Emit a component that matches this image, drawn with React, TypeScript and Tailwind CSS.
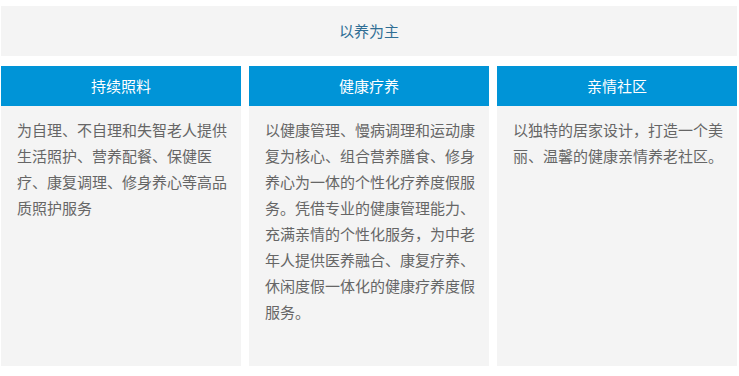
import React from "react";

const columns = [
  {
    title: "持续照料",
    text: "为自理、不自理和失智老人提供生活照护、营养配餐、保健医疗、康复调理、修身养心等高品质照护服务",
  },
  {
    title: "健康疗养",
    text: "以健康管理、慢病调理和运动康复为核心、组合营养膳食、修身养心为一体的个性化疗养度假服务。凭借专业的健康管理能力、充满亲情的个性化服务，为中老年人提供医养融合、康复疗养、休闲度假一体化的健康疗养度假服务。",
  },
  {
    title: "亲情社区",
    text: "以独特的居家设计，打造一个美丽、温馨的健康亲情养老社区。",
  },
];

const App = () => {
  return (
    <main
      className="w-[739px] h-[376px] bg-white pl-[1px] pr-[2px] pt-[6px]"
      style={{ fontFamily: '"Microsoft YaHei", "Noto Sans CJK SC", sans-serif' }}
    >
      <section className="h-[50px] bg-[#f4f4f4] flex items-center justify-center">
        <h2 className="text-[15px] text-[#2f6e94]">以养为主</h2>
      </section>
      <section className="mt-[10px] grid grid-cols-3 gap-2">
        {columns.map((col) => (
          <article key={col.title} className="h-[300px] bg-[#f4f4f4] flex flex-col">
            <div className="h-10 bg-[#0094d7] flex items-center justify-center">
              <h3 className="text-[15px] text-white">{col.title}</h3>
            </div>
            <p className="pl-4 pr-3 pt-[11px] text-[15px] leading-[26px] text-[#666]">
              {col.text}
            </p>
          </article>
        ))}
      </section>
    </main>
  );
};

export default App;
